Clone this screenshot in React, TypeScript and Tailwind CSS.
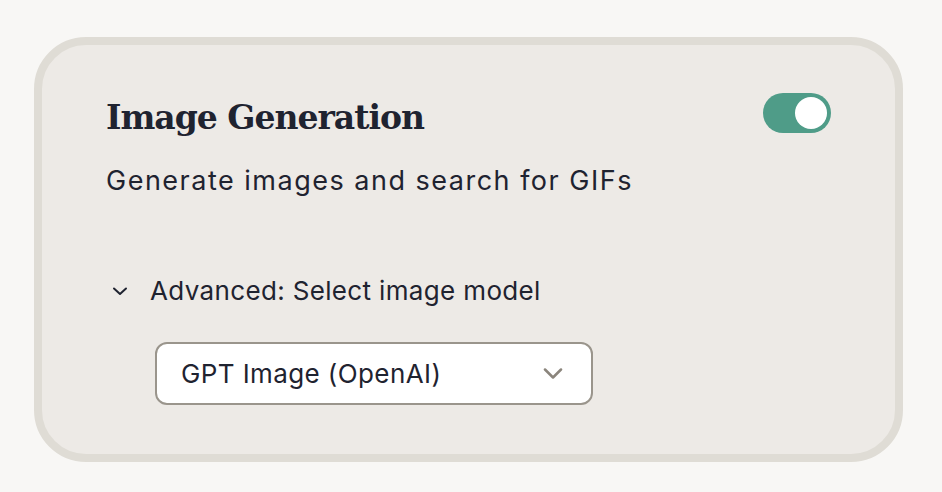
import React from "react";

export default function App() {
  return (
    <div className="min-h-screen w-full bg-[#f8f7f5] pt-[37px] pl-[34px]">
      <div className="box-border flex h-[425px] w-[869px] flex-col rounded-[52px] border-[8px] border-[#dfdcd5] bg-[#edeae6] pl-[64px] pr-[64px] pt-[48px] text-[#1f2330]">
        <div className="flex items-start justify-between">
          <h2 className="mt-[5px] text-[33px] leading-[40px] font-bold tracking-[-1px] [font-family:'DejaVu_Serif',serif]">
            Image Generation
          </h2>
          <button
            type="button"
            aria-pressed="true"
            className="flex h-[40px] w-[68px] items-center justify-end rounded-full bg-[#4f9c88] p-[4px]"
          >
            <span className="block h-[32px] w-[32px] rounded-full bg-white" />
          </button>
        </div>
        <p className="mt-[25px] text-[27px] leading-[36px] tracking-[1.5px] [font-family:Inter,sans-serif]">
          Generate images and search for GIFs
        </p>
        <button
          type="button"
          className="mt-[76px] flex items-center self-start text-[26px] leading-[32px] tracking-[0.35px] [font-family:Inter,sans-serif]"
        >
          <svg width="20" height="20" viewBox="0 0 20 20" className="ml-[4px] mr-[20px]" fill="none">
            <path d="M4 7.5 L10 13 L16 7.5" stroke="#1f2330" strokeWidth="2" strokeLinecap="round" strokeLinejoin="round" />
          </svg>
          Advanced: Select image model
        </button>
        <div className="ml-[49px] mt-[35px] flex h-[63px] w-[438px] items-center justify-between rounded-[12px] border-[2px] border-[#9a958c] bg-white pl-[24px] pr-[28px]">
          <span className="text-[26px] tracking-[0.4px] [font-family:Inter,sans-serif]">GPT Image (OpenAI)</span>
          <svg width="20" height="12" viewBox="0 0 20 12" fill="none">
            <path d="M2 1.5 L10 9.5 L18 1.5" stroke="#8b857c" strokeWidth="2.5" strokeLinecap="round" strokeLinejoin="round" />
          </svg>
        </div>
      </div>
    </div>
  );
}
